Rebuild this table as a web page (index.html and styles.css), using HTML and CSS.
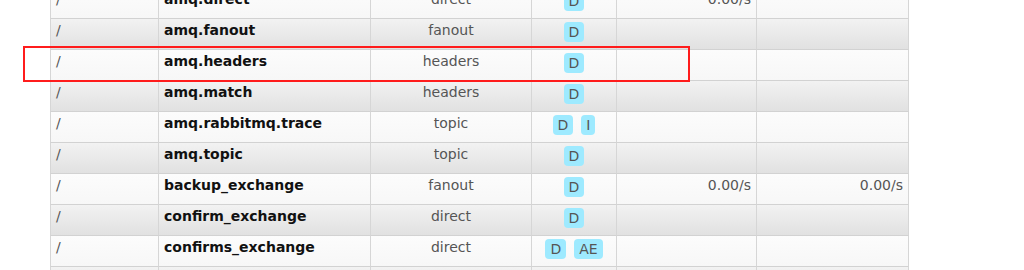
FILE: index.html
```html
<!DOCTYPE html>
<html>
<head>
<meta charset="utf-8">
<link rel="stylesheet" href="styles.css">
</head>
<body>
<div class="page">
  <table class="list">
    <colgroup>
      <col class="c-vhost"><col class="c-name"><col class="c-type"><col class="c-feat"><col class="c-in"><col class="c-out">
    </colgroup>
    <tbody>
      <tr class="alt2"><td class="vhost">/</td><td class="name">amq.direct</td><td class="type">direct</td><td class="feat"><span class="tags"><abbr class="tag">D</abbr></span></td><td class="rate">0.00/s</td><td class="rate"></td></tr>
      <tr class="alt1"><td class="vhost">/</td><td class="name">amq.fanout</td><td class="type">fanout</td><td class="feat"><span class="tags"><abbr class="tag">D</abbr></span></td><td class="rate"></td><td class="rate"></td></tr>
      <tr class="alt2"><td class="vhost">/</td><td class="name">amq.headers</td><td class="type">headers</td><td class="feat"><span class="tags"><abbr class="tag">D</abbr></span></td><td class="rate"></td><td class="rate"></td></tr>
      <tr class="alt1"><td class="vhost">/</td><td class="name">amq.match</td><td class="type">headers</td><td class="feat"><span class="tags"><abbr class="tag">D</abbr></span></td><td class="rate"></td><td class="rate"></td></tr>
      <tr class="alt2"><td class="vhost">/</td><td class="name">amq.rabbitmq.trace</td><td class="type">topic</td><td class="feat"><span class="tags"><abbr class="tag">D</abbr><abbr class="tag">I</abbr></span></td><td class="rate"></td><td class="rate"></td></tr>
      <tr class="alt1"><td class="vhost">/</td><td class="name">amq.topic</td><td class="type">topic</td><td class="feat"><span class="tags"><abbr class="tag">D</abbr></span></td><td class="rate"></td><td class="rate"></td></tr>
      <tr class="alt2"><td class="vhost">/</td><td class="name">backup_exchange</td><td class="type">fanout</td><td class="feat"><span class="tags"><abbr class="tag">D</abbr></span></td><td class="rate">0.00/s</td><td class="rate">0.00/s</td></tr>
      <tr class="alt1"><td class="vhost">/</td><td class="name">confirm_exchange</td><td class="type">direct</td><td class="feat"><span class="tags"><abbr class="tag">D</abbr></span></td><td class="rate"></td><td class="rate"></td></tr>
      <tr class="alt2"><td class="vhost">/</td><td class="name">confirms_exchange</td><td class="type">direct</td><td class="feat"><span class="tags"><abbr class="tag">D</abbr><abbr class="tag">AE</abbr></span></td><td class="rate"></td><td class="rate"></td></tr>
      <tr class="alt1"><td class="vhost">/</td><td class="name">direct_exchange</td><td class="type">direct</td><td class="feat"><span class="tags"><abbr class="tag">D</abbr></span></td><td class="rate"></td><td class="rate"></td></tr>
    </tbody>
  </table>
  <div class="highlight"></div>
</div>
</body>
</html>
```
FILE: styles.css
```css
html, body {
  margin: 0;
  padding: 0;
  background: #fff;
  overflow: hidden;
}
.page {
  position: relative;
  width: 1024px;
  height: 270px;
  overflow: hidden;
  padding-left: 50px;
  box-sizing: border-box;
}
.list {
  table-layout: fixed;
  width: 859px;
  border-collapse: separate;
  border-spacing: 0;
  margin-top: -13px;
  font-family: "DejaVu Sans", Verdana, sans-serif;
  font-size: 14px;
  line-height: 17px;
  color: #555;
}
.c-vhost { width: 108px; }
.c-name { width: 212px; }
.c-type { width: 161px; }
.c-feat { width: 85px; }
.c-in { width: 140px; }
.c-out { width: 153px; }
.list td {
  height: 31px;
  box-sizing: border-box;
  padding: 3px 5px 0 5px;
  vertical-align: top;
  border-top: 1px solid #d2d2d2;
  border-left: 1px solid #d6d6d6;
  white-space: nowrap;
}
.list td:last-child {
  border-right: 1px solid #d6d6d6;
}
.alt1 td {
  background: linear-gradient(to bottom, #f2f2f2 0%, #e1e1e1 100%);
}
.alt2 td {
  background: linear-gradient(to bottom, #fcfcfc 0%, #f7f7f7 100%);
}
.vhost { color: #555; }
.name { font-weight: bold; color: #111; }
.type { text-align: center; }
.feat { text-align: center; }
.rate { text-align: right; }
.tags {
  display: inline-flex;
  gap: 8px;
  justify-content: center;
  vertical-align: top;
}
.tag {
  display: inline-block;
  height: 20px;
  line-height: 20px;
  padding: 0 5px;
  border-radius: 4px;
  background: #9eeaff;
  color: #555;
  text-decoration: none;
  border: none;
}
.highlight {
  position: absolute;
  left: 23px;
  top: 46px;
  width: 667px;
  height: 36px;
  box-sizing: border-box;
  border: 2px solid #ff1c1c;
}
```
